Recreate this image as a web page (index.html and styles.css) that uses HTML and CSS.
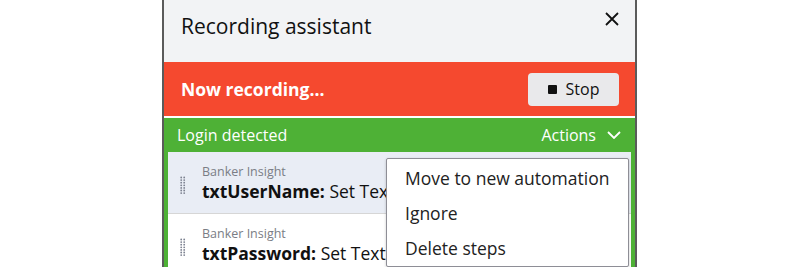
FILE: index.html
```html
<!DOCTYPE html>
<html lang="en">
<head>
    <meta charset="UTF-8">
    <title>Recording assistant</title>
    <link rel="stylesheet" href="styles.css">
</head>
<body>
    <div class="panel">
        <div class="header">
            <h1>Recording assistant</h1>
            <svg class="close" width="14" height="14" viewBox="0 0 14 14">
                <path d="M1 1 L13 13 M13 1 L1 13" stroke="#111" stroke-width="1.8" fill="none"/>
            </svg>
        </div>
        <div class="recording">
            <span class="rec-label">Now recording...</span>
            <button class="stop"><span class="square"></span>Stop</button>
        </div>
        <div class="group">
            <div class="group-head">
                <span>Login detected</span>
                <span class="actions">Actions
                    <svg width="14" height="8" viewBox="0 0 14 8">
                        <path d="M1 1 L7 7 L13 1" stroke="#fff" stroke-width="1.8" fill="none"/>
                    </svg>
                </span>
            </div>
            <div class="item active">
                <svg class="grip" width="6" height="18" viewBox="0 0 6 18">
                    <g fill="#7c8190">
                        <circle cx="1.2" cy="1.5" r="0.9"/><circle cx="4.2" cy="1.5" r="0.9"/>
                        <circle cx="1.2" cy="4.1" r="0.9"/><circle cx="4.2" cy="4.1" r="0.9"/>
                        <circle cx="1.2" cy="6.7" r="0.9"/><circle cx="4.2" cy="6.7" r="0.9"/>
                        <circle cx="1.2" cy="9.3" r="0.9"/><circle cx="4.2" cy="9.3" r="0.9"/>
                        <circle cx="1.2" cy="11.9" r="0.9"/><circle cx="4.2" cy="11.9" r="0.9"/>
                        <circle cx="1.2" cy="14.5" r="0.9"/><circle cx="4.2" cy="14.5" r="0.9"/>
                        <circle cx="1.2" cy="17.1" r="0.9"/><circle cx="4.2" cy="17.1" r="0.9"/>
                    </g>
                </svg>
                <div class="item-text">
                    <div class="app">Banker Insight</div>
                    <div class="step"><b>txtUserName:</b> Set Text</div>
                </div>
            </div>
            <div class="item">
                <svg class="grip" width="6" height="18" viewBox="0 0 6 18">
                    <g fill="#7c8190">
                        <circle cx="1.2" cy="1.5" r="0.9"/><circle cx="4.2" cy="1.5" r="0.9"/>
                        <circle cx="1.2" cy="4.1" r="0.9"/><circle cx="4.2" cy="4.1" r="0.9"/>
                        <circle cx="1.2" cy="6.7" r="0.9"/><circle cx="4.2" cy="6.7" r="0.9"/>
                        <circle cx="1.2" cy="9.3" r="0.9"/><circle cx="4.2" cy="9.3" r="0.9"/>
                        <circle cx="1.2" cy="11.9" r="0.9"/><circle cx="4.2" cy="11.9" r="0.9"/>
                        <circle cx="1.2" cy="14.5" r="0.9"/><circle cx="4.2" cy="14.5" r="0.9"/>
                        <circle cx="1.2" cy="17.1" r="0.9"/><circle cx="4.2" cy="17.1" r="0.9"/>
                    </g>
                </svg>
                <div class="item-text">
                    <div class="app">Banker Insight</div>
                    <div class="step"><b>txtPassword:</b> Set Text</div>
                </div>
            </div>
        </div>

        <ul class="menu">
            <li>Move to new automation</li>
            <li>Ignore</li>
            <li>Delete steps</li>
        </ul>
    </div>
</body>
</html>
```

FILE: styles.css
```css
body {
    margin: 0;
    background-color: #ffffff;
    font-family: "Open Sans", sans-serif;
}

.panel {
    position: relative;
    width: 471px;
    height: 267px;
    margin-left: 162px;
    border-left: 2px solid #5b5b5b;
    border-right: 2px solid #5b5b5b;
    background-color: #ffffff;
    overflow: hidden;
}

.header {
    height: 62px;
    box-sizing: border-box;
    background-color: #f2f3f5;
    display: flex;
    align-items: flex-start;
    justify-content: space-between;
    padding: 11px 16px 0 17px;
}

.header h1 {
    margin: 0;
    font-size: 21px;
    line-height: 30px;
    font-weight: 400;
    color: #111;
}

.close {
    margin-top: 1px;
}

.recording {
    height: 54px;
    background-color: #f5492f;
    display: flex;
    align-items: center;
    justify-content: space-between;
    padding: 0 16px 0 17px;
    margin-bottom: 2px;
}

.rec-label {
    color: #ffffff;
    font-weight: 700;
    font-size: 17.5px;
}

.stop {
    width: 91px;
    height: 33px;
    border: none;
    border-radius: 4px;
    background-color: #e9e9eb;
    font-family: "Open Sans", sans-serif;
    font-size: 16px;
    color: #111;
    display: flex;
    align-items: center;
    justify-content: center;
    gap: 9px;
}

.square {
    width: 9px;
    height: 9px;
    background-color: #111;
    border-radius: 1px;
}

.group {
    background-color: #4eb136;
    padding: 0 4px;
    height: 200px;
}

.group-head {
    height: 34px;
    display: flex;
    align-items: center;
    justify-content: space-between;
    padding: 0 10px 0 9px;
    color: #ffffff;
    font-size: 16px;
}

.actions {
    display: flex;
    align-items: center;
    gap: 11px;
}

.item {
    height: 62px;
    background-color: #ffffff;
    border-bottom: 1px solid #d6d6d6;
    display: flex;
    align-items: center;
    padding-left: 12px;
}

.item.active {
    height: 61px;
    background-color: #e9edf5;
}

.grip {
    margin-right: 16px;
    margin-top: 4px;
}

.app {
    font-size: 12.5px;
    color: #7a7d85;
    line-height: 16px;
}

.step {
    font-size: 17.5px;
    color: #111;
    line-height: 22px;
    white-space: nowrap;
}

.menu {
    position: absolute;
    left: 222px;
    top: 158px;
    width: 241px;
    margin: 0;
    padding: 2px 0 0;
    list-style: none;
    background-color: #ffffff;
    border: 1px solid #8e8e96;
    border-radius: 2px;
    box-shadow: 0 1px 3px rgba(0, 0, 0, 0.2);
}

.menu li {
    height: 35px;
    line-height: 35px;
    padding-left: 18px;
    font-size: 17.5px;
    color: #222;
}
```
